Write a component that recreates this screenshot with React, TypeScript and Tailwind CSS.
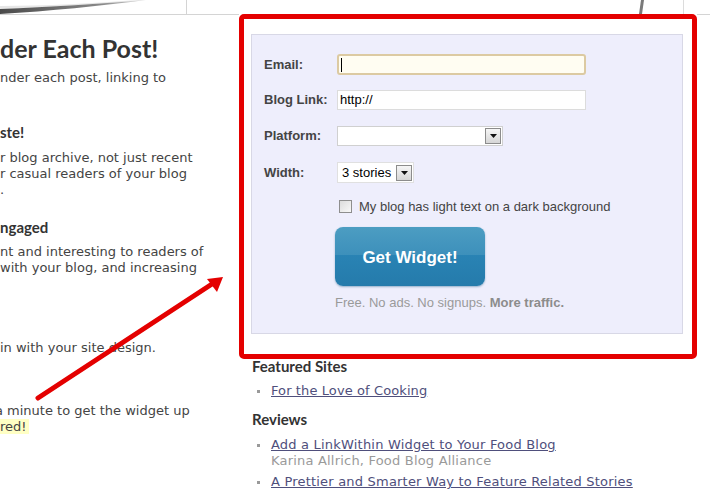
const verdana = "[font-family:'DejaVu_Sans',Verdana,sans-serif]";
const trebuchet = "[font-family:Lato,'Liberation_Sans',sans-serif]";
const arial = "[font-family:'Liberation_Sans',Arial,sans-serif]";

const Line = ({ children, className = "" }: { children?: React.ReactNode; className?: string }) => (
  <div className={`h-[16px] leading-[16px] whitespace-nowrap text-[13px] text-[#444] ${verdana} ${className}`}>
    {children}
  </div>
);

const Arrow = () => (
  <div className="w-[16px] h-[16px] mr-[1px] border border-[#8c8c8c] bg-gradient-to-b from-[#f6f6f6] to-[#d6d6d6] flex items-center justify-center">
    <svg width="7" height="4" viewBox="0 0 7 4">
      <path d="M0 0 H7 L3.5 4 Z" fill="#111" />
    </svg>
  </div>
);

const Label = ({ children }: { children: React.ReactNode }) => (
  <div className={`w-[73px] text-[13px] font-bold text-[#444] ${arial}`}>{children}</div>
);

export default function App() {
  return (
    <div className="relative w-[710px] h-[491px] overflow-hidden bg-white">
      {/* page curl strip */}
      <svg width="710" height="14" className="block">
        <defs>
          <linearGradient id="curl" x1="0" y1="0" x2="1" y2="0">
            <stop offset="0" stopColor="#4a4a4a" />
            <stop offset="0.7" stopColor="#8a8a8a" />
            <stop offset="1" stopColor="#d8d8d8" />
          </linearGradient>
        </defs>
        <path d="M0 9 C50 7 100 4 146 0 L140 0 C95 3 45 6 0 6 Z" fill="#e6e6e6" />
        <path d="M0 14 L0 9 C50 7 100 4 146 0 C100 6 50 11 0 14 Z" fill="url(#curl)" />
        <line x1="186.5" y1="0" x2="186.5" y2="14" stroke="#d4d4d4" />
        <path d="M641 0 L644 0 L642 14 L639 14 Z" fill="#7a7a7a" />
        <line x1="683.5" y1="0" x2="683.5" y2="14" stroke="#dcdcdc" />
      </svg>

      <div className="flex">
        {/* left column, cut by the viewport */}
        <div className="w-[239px] h-[477px] overflow-hidden border-t border-[#d4d4d4]">
          <div className={`mt-[18px] text-[25px] leading-[30px] font-bold text-[#333] whitespace-nowrap ${trebuchet}`}>
            der Each Post!
          </div>
          <Line className="mt-[7px]">nder each post, linking to</Line>
          <div className={`mt-[37px] text-[15px] leading-[18px] font-bold text-[#333] ${trebuchet}`}>ste!</div>
          <Line className="mt-[9px]">r blog archive, not just recent</Line>
          <Line>r casual readers of your blog</Line>
          <Line>.</Line>
          <div className={`mt-[20px] text-[15px] leading-[18px] font-bold text-[#333] ${trebuchet}`}>ngaged</div>
          <Line className="mt-[8px]">nt and interesting to readers of</Line>
          <Line>with your blog, and increasing</Line>
          <Line className="mt-[64px]">in with your site design.</Line>
          <Line className="mt-[47px] -ml-[5px]">a minute to get the widget up</Line>
          <Line>
            <span className="bg-[#ffffc4] pr-[2px]">red!</span>
          </Line>
        </div>

        {/* right column */}
        <div className="w-[458px]">
          <div className="h-[345px] border-[5px] border-[#e40000] rounded-[5px] pt-[15px] pl-[7px]">
            <div className="w-[432px] h-[300px] border border-[#d8d8e6] bg-[#eeeefc] pl-[12px] pt-[19px]">
              <div className="flex items-center">
                <Label>Email:</Label>
                <div className="w-[249px] h-[21px] border-2 border-[#dccaa2] rounded-[3px] bg-[#fffdf2] flex items-center pl-[2px]">
                  <div className="w-px h-[14px] bg-black" />
                </div>
              </div>
              <div className="flex items-center mt-[15px]">
                <Label>Blog Link:</Label>
                <div className={`w-[249px] h-[20px] border border-[#dcdcdc] bg-white flex items-center pl-[2px] text-[13px] text-black ${arial}`}>
                  http://
                </div>
              </div>
              <div className="flex items-center mt-[16px]">
                <Label>Platform:</Label>
                <div className="w-[166px] h-[20px] border border-[#d0d0d0] bg-white flex items-center justify-end">
                  <Arrow />
                </div>
              </div>
              <div className="flex items-center mt-[16px]">
                <Label>Width:</Label>
                <div className="w-[77px] h-[21px] border border-[#e0e0e0] bg-white flex items-center justify-between pl-[4px]">
                  <span className={`text-[13px] text-black ${arial}`}>3 stories</span>
                  <Arrow />
                </div>
              </div>
              <div className="flex items-center mt-[17px] pl-[75px] h-[13px]">
                <div className="w-[13px] h-[13px] border border-[#8e8e8e] bg-gradient-to-br from-[#dcdcdc] to-[#f8f8f8]" />
                <span className={`ml-[7px] text-[13px] text-[#444] ${arial}`}>My blog has light text on a dark background</span>
              </div>
              <div className="ml-[71px] mt-[14px] w-[150px] h-[59px] rounded-[8px] overflow-hidden shadow-[0_1px_2px_rgba(40,100,140,0.45)] flex flex-col relative">
                <div className="h-[28px] bg-gradient-to-b from-[#4c9dc2] to-[#3d90bb]" />
                <div className="flex-1 bg-gradient-to-b from-[#2983b4] to-[#257bab]" />
                <div className={`absolute inset-0 flex items-center justify-center pt-[3px] text-[17px] font-bold text-white ${arial}`}>
                  Get Widget!
                </div>
              </div>
              <div className={`ml-[71px] mt-[9px] text-[13px] leading-[15px] text-[#9a9a9a] ${arial}`}>
                Free. No ads. No signups. <b className="text-[#8c8c8c]">More traffic.</b>
              </div>
            </div>
          </div>

          <div className="pl-[13px]">
            <div className={`-mt-[1px] text-[15px] leading-[16px] font-bold text-[#333] ${trebuchet}`}>Featured Sites</div>
            <ul className={`mt-[9px] text-[13px] leading-[16px] tracking-[0.1px] ${verdana}`}>
              <li className="flex items-center">
                <span className="w-[3px] h-[3px] bg-[#9a9a9a] ml-[5px] mr-[11px]" />
                <span className="text-[#4f4f7c] underline">For the Love of Cooking</span>
              </li>
            </ul>
            <div className={`mt-[11px] text-[15px] leading-[18px] font-bold text-[#333] ${trebuchet}`}>Reviews</div>
            <ul className={`mt-[9px] text-[13px] leading-[16px] tracking-[0.2px] ${verdana}`}>
              <li className="flex">
                <span className="w-[3px] h-[3px] bg-[#9a9a9a] ml-[5px] mr-[11px] mt-[7px]" />
                <div>
                  <div className="text-[#4f4f7c] underline">Add a LinkWithin Widget to Your Food Blog</div>
                  <div className="text-[#9a9a9a]">Karina Allrich, Food Blog Alliance</div>
                </div>
              </li>
              <li className="flex mt-[5px]">
                <span className="w-[3px] h-[3px] bg-[#9a9a9a] ml-[5px] mr-[11px] mt-[7px]" />
                <span className="text-[#4f4f7c] underline whitespace-nowrap">A Prettier and Smarter Way to Feature Related Stories</span>
              </li>
            </ul>
          </div>
        </div>

        <div className="flex-1 border-t border-[#d4d4d4] mt-0" />
      </div>

      {/* red annotation arrow */}
      <svg width="710" height="491" className="absolute left-0 top-0 pointer-events-none">
        <line x1="38" y1="398" x2="212" y2="284" stroke="#e40000" strokeWidth="5" strokeLinecap="round" />
        <path d="M223 277 L207 279 L217 292 Z" fill="#e40000" />
      </svg>
    </div>
  );
}
